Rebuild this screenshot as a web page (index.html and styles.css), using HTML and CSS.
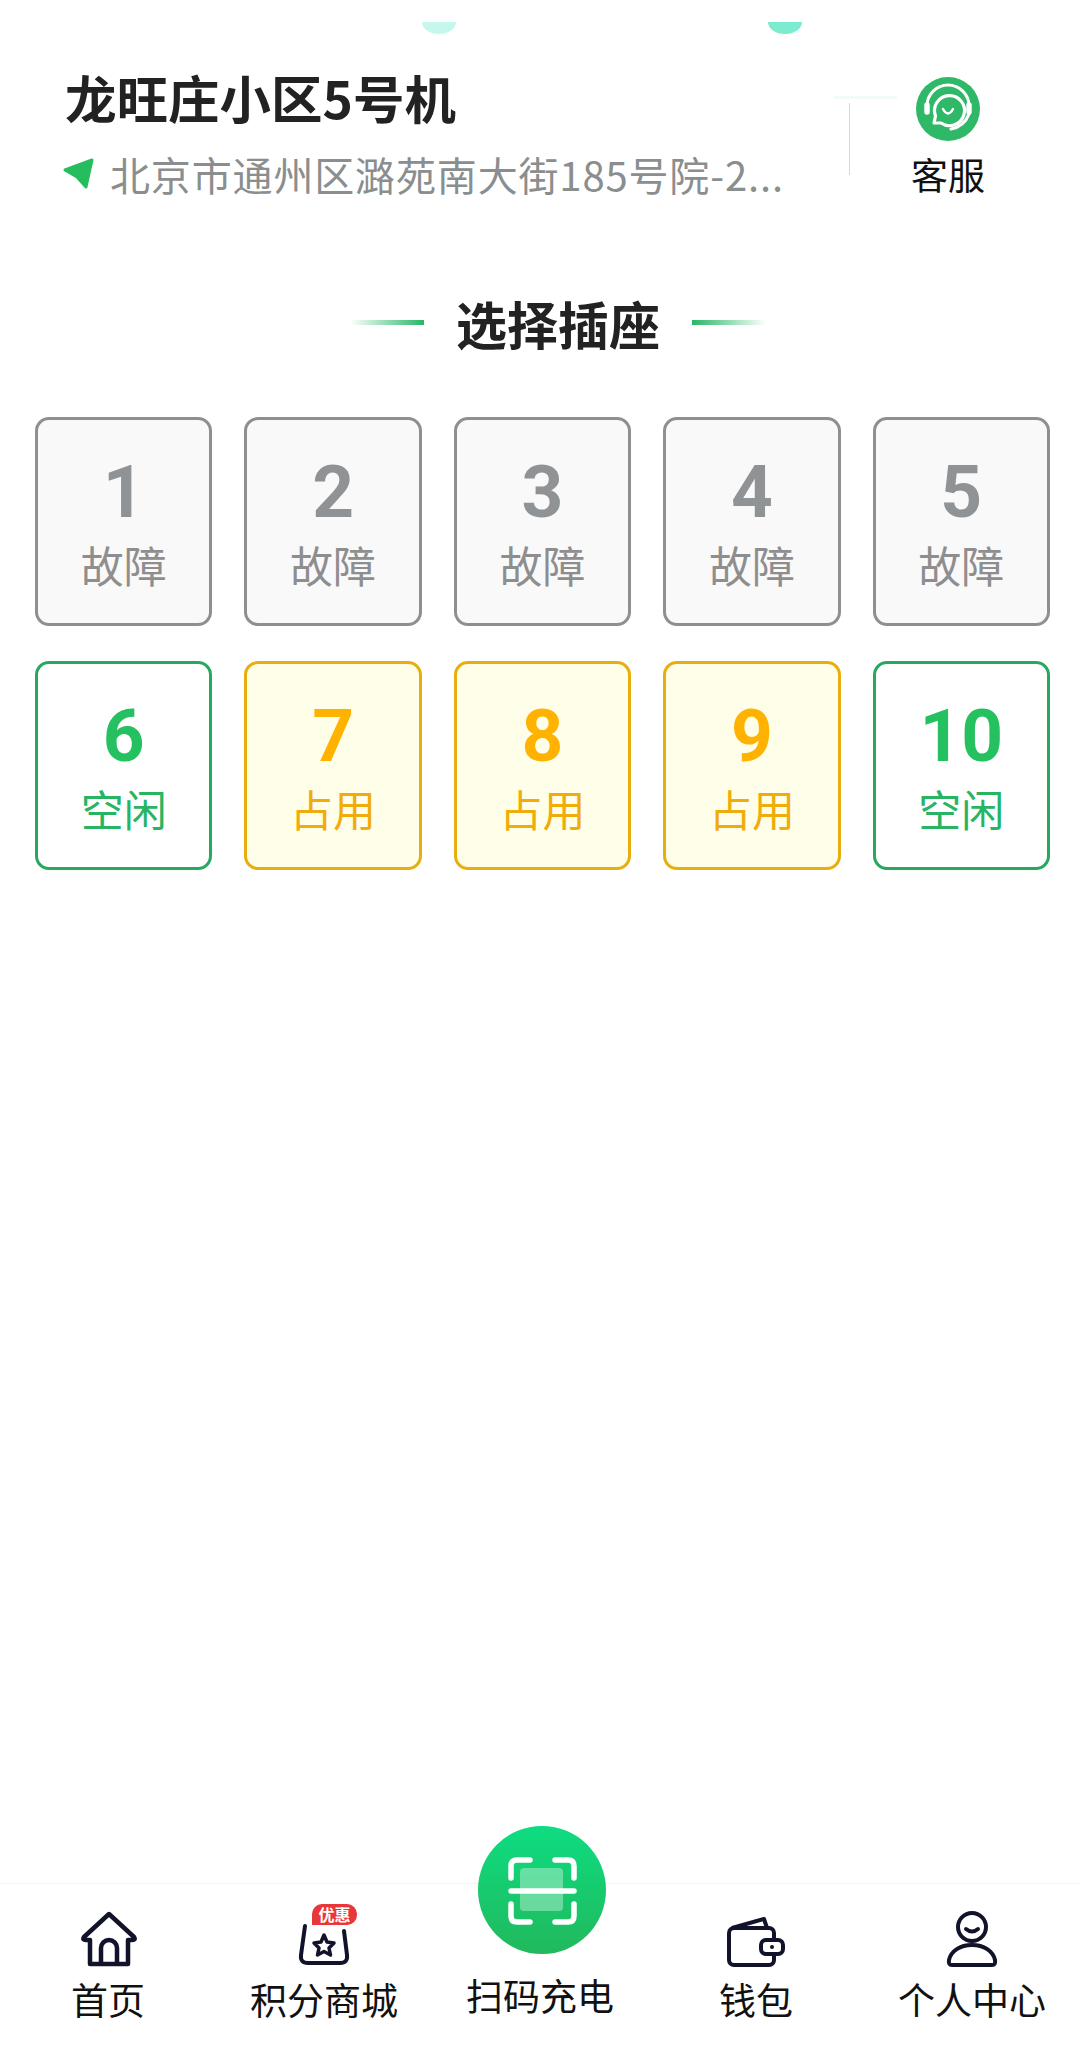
FILE: index.html
```html
<!DOCTYPE html>
<html lang="zh-CN">
<head>
    <meta charset="UTF-8">
    <meta name="viewport" content="width=device-width, initial-scale=1.0">
    <title>选择插座</title>
    <link rel="stylesheet" href="styles.css">
</head>
<body>

    <div class="page">
        <!-- Faint pieces of the banner behind the header -->
        <span class="blob blob-left"></span>
        <span class="blob blob-right"></span>
        <span class="streak"></span>

        <div class="header">
            <div class="station">
                <h1 class="station-name">龙旺庄小区5号机</h1>
                <div class="station-addr">
                    <svg class="addr-icon" width="34" height="34" viewBox="0 0 34 34">
                        <path d="M4 13 L31 3 L25 30 L16 20 Z" fill="#25bd5e" stroke="#25bd5e" stroke-width="3" stroke-linejoin="round"/>
                    </svg>
                    <span>北京市通州区潞苑南大街185号院-2...</span>
                </div>
            </div>
            <div class="service">
                <svg width="64" height="64" viewBox="0 0 64 64">
                    <circle cx="32" cy="32" r="32" fill="#2fb867"/>
                    <g fill="none" stroke="#fff" stroke-linecap="round">
                        <path d="M11 29 A21 21 0 0 1 53 29" stroke-width="3"/>
                        <path d="M11 28 V35 M53 28 V35" stroke-width="5.500"/>
                        <path d="M18 46 L19.500 39 A15 15 0 1 1 25 46 Z" stroke-width="3.200" stroke-linejoin="round"/>
                        <path d="M27 32 Q32 41 37 32" stroke-width="2.500"/>
                        <path d="M53 37 A24 24 0 0 1 35 52" stroke-width="3.200"/>
                    </g>
                </svg>
                <span class="service-label">客服</span>
            </div>
        </div>

        <div class="section-title">
            <span class="title-line line-left"></span>
            <h2>选择插座</h2>
            <span class="title-line line-right"></span>
        </div>

        <div class="sockets">
            <div class="socket fault"><b>1</b><span>故障</span></div>
            <div class="socket fault"><b>2</b><span>故障</span></div>
            <div class="socket fault"><b>3</b><span>故障</span></div>
            <div class="socket fault"><b>4</b><span>故障</span></div>
            <div class="socket fault"><b>5</b><span>故障</span></div>
            <div class="socket free"><b>6</b><span>空闲</span></div>
            <div class="socket busy"><b>7</b><span>占用</span></div>
            <div class="socket busy"><b>8</b><span>占用</span></div>
            <div class="socket busy"><b>9</b><span>占用</span></div>
            <div class="socket free"><b>10</b><span>空闲</span></div>
        </div>

        <div class="tabbar">
            <div class="tab">
                <div class="tab-icon icon-home">
                    <svg width="56" height="56" viewBox="0 0 56 56" fill="none" stroke="#10132a" stroke-width="4.500" stroke-linejoin="round">
                        <path d="M28 3 L3 26 Q1 29 5 29 H9 V53 H47 V29 H51 Q55 29 53 26 Z"/>
                        <path d="M20 53 V37 A8 8 0 0 1 36 37 V53"/>
                    </svg>
                </div>
                <span>首页</span>
            </div>
            <div class="tab">
                <div class="tab-icon">
                    <svg width="52" height="44" viewBox="0 0 52 44" fill="none" stroke="#10132a" stroke-width="4" stroke-linejoin="round" stroke-linecap="round">
                        <path d="M7 3 L3 32 Q2 40 10 40 H42 Q50 40 49 32 L46 8"/>
                        <path d="M26 12 L29 19 L36 20 L31 25 L32.500 32 L26 28.500 L19.500 32 L21 25 L16 20 L23 19 Z" stroke-width="3.500"/>
                    </svg>
                    <span class="badge">优惠</span>
                </div>
                <span>积分商城</span>
            </div>
            <div class="tab tab-scan">
                <div class="scan-btn">
                    <svg width="128" height="128" viewBox="0 0 128 128" fill="none">
                        <rect x="42" y="42" width="43" height="43" rx="4" fill="#fff" fill-opacity="0.35"/>
                        <g stroke="#fff" stroke-width="5.500" stroke-linecap="round">
                            <path d="M52 34 H39 Q33 34 33 40 V52"/>
                            <path d="M77 34 H90 Q96 34 96 40 V52"/>
                            <path d="M33 78 V90 Q33 96 39 96 H52"/>
                            <path d="M96 78 V90 Q96 96 90 96 H77"/>
                            <path d="M33 65 H96"/>
                        </g>
                    </svg>
                </div>
                <span>扫码充电</span>
            </div>
            <div class="tab">
                <div class="tab-icon">
                    <svg width="58" height="50" viewBox="0 0 58 50" fill="none" stroke="#10132a" stroke-width="4" stroke-linejoin="round">
                        <rect x="2" y="11" width="45" height="37" rx="5"/>
                        <path d="M5 11 L37 2 L40 11"/>
                        <rect x="34" y="23" width="22" height="14" rx="5" fill="#fff"/>
                        <circle cx="45" cy="30" r="2" fill="#10132a" stroke="none"/>
                    </svg>
                </div>
                <span>钱包</span>
            </div>
            <div class="tab">
                <div class="tab-icon">
                    <svg width="52" height="56" viewBox="0 0 52 56" fill="none" stroke="#10132a" stroke-width="4" stroke-linecap="round">
                        <circle cx="26" cy="16" r="14"/>
                        <path d="M20 18 Q26 23 32 18"/>
                        <path d="M6 54 H46 Q50 54 49 49 C47 40 38 34 26 34 C14 34 5 40 3 49 Q2 54 6 54 Z"/>
                    </svg>
                </div>
                <span>个人中心</span>
            </div>
        </div>
    </div>

</body>
</html>
```

FILE: styles.css
```css
* {
    box-sizing: border-box;
}

body {
    margin: 0;
    background-color: #fff;
    font-family: "Noto Sans CJK SC", "Noto Sans", sans-serif;
}

.page {
    position: relative;
    display: flex;
    flex-direction: column;
    height: 2054px;
    overflow: hidden;
}

/* Banner leftovers at the top */
.blob {
    position: absolute;
    top: 22px;
    width: 34px;
    height: 12px;
    border-radius: 0 0 17px 17px / 0 0 12px 12px;
}

.blob-left {
    left: 422px;
    background-color: #c6f7ec;
}

.blob-right {
    left: 768px;
    background-color: #7debd0;
}

.streak {
    position: absolute;
    top: 96px;
    left: 833px;
    width: 64px;
    height: 3px;
    background-color: #f1fbf9;
}

/* Header */
.header {
    display: flex;
    justify-content: space-between;
    padding: 63px 95px 0 65px;
    height: 224px;
}

.station-name {
    margin: 0;
    font-size: 51.500px;
    line-height: 68px;
    font-weight: 700;
    color: #222;
}

.station-addr {
    display: flex;
    align-items: center;
    gap: 15px;
    margin-top: 15px;
    margin-left: -4px;
    font-size: 40px;
    line-height: 56px;
    letter-spacing: 0.85px;
    color: #8a8e8e;
}

.addr-icon {
    flex-shrink: 0;
}

.service {
    display: flex;
    flex-direction: column;
    align-items: center;
    position: relative;
    padding-top: 14px;
}

/* thin divider left of the service button */
.service::before {
    content: "";
    position: absolute;
    top: 40px;
    left: -62px;
    width: 1px;
    height: 72px;
    background-color: #d4d8d8;
}

.service-label {
    margin-top: 8px;
    font-size: 37px;
    line-height: 50px;
    color: #111;
}

/* Section title */
.section-title {
    display: flex;
    align-items: center;
    justify-content: center;
    gap: 32px;
    padding: 4px 0 0 36px;
    height: 193px;
}

.section-title h2 {
    margin: 0;
    font-size: 51px;
    line-height: 60px;
    font-weight: 700;
    color: #222;
}

.title-line {
    width: 74px;
    height: 5px;
}

.line-left {
    background: linear-gradient(to right, #fff, #25b865);
}

.line-right {
    background: linear-gradient(to left, #fff, #25b865);
}

/* Socket grid */
.sockets {
    display: grid;
    grid-template-columns: repeat(5, 1fr);
    grid-auto-rows: 209px;
    gap: 35px 32px;
    padding: 0 30px 0 35px;
}

.socket {
    display: flex;
    flex-direction: column;
    align-items: center;
    padding-top: 29px;
    border: 3px solid;
    border-radius: 14px;
}

.socket b {
    font-family: Roboto, sans-serif;
    font-size: 73px;
    line-height: 86px;
    font-weight: 700;
}

.socket span {
    font-size: 43px;
    line-height: 58px;
}

.fault {
    border-color: #8f8f8f;
    background-color: #f9f9f9;
}

.fault b {
    color: #909396;
}

.fault span {
    color: #8e8e8e;
}

.free {
    border-color: #27a85f;
}

.free b {
    color: #25c05f;
}

.free span {
    color: #28b463;
}

.busy {
    border-color: #e8ad0e;
    background-color: #fffee8;
}

.busy b {
    color: #ffb300;
}

.busy span {
    color: #f0ac0a;
}

/* Bottom tab bar */
.tabbar {
    display: grid;
    grid-template-columns: repeat(5, 1fr);
    height: 171px;
    margin-top: auto;
    border-top: 1px solid #f3f3f3;
    background-color: #fff;
}

.tab {
    display: flex;
    flex-direction: column;
    align-items: center;
    padding-top: 23px;
    font-size: 37px;
    line-height: 50px;
    color: #111;
}

.tab-icon {
    position: relative;
    display: flex;
    align-items: flex-end;
    justify-content: center;
    height: 60px;
    margin-bottom: 7px;
}

.icon-home {
    margin-left: 2px;
}

.badge {
    position: absolute;
    top: -3px;
    left: 14px;
    width: 45px;
    height: 21px;
    border-radius: 10px 10px 10px 0;
    background-color: #e8373a;
    color: #fff;
    font-size: 16px;
    line-height: 21px;
    font-weight: 700;
    text-align: center;
}

.tab-scan {
    padding-top: 0;
    margin-top: -58px;
}

.scan-btn {
    width: 128px;
    height: 128px;
    margin-left: 4px;
    margin-bottom: 16px;
    border-radius: 50%;
    background: linear-gradient(to bottom, #0edc81, #21b95c);
}
```
